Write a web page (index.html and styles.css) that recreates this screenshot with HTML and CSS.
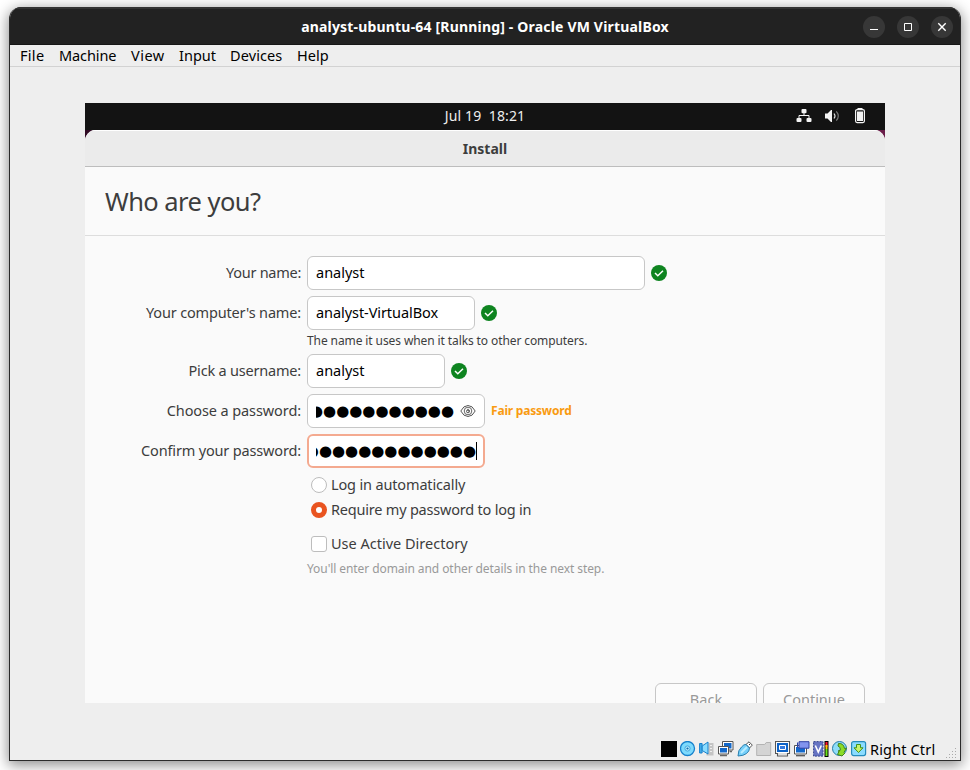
FILE: index.html
```html
<!DOCTYPE html>
<html lang="en">
<head>
<meta charset="utf-8">
<title>analyst-ubuntu-64 [Running] - Oracle VM VirtualBox</title>
<link rel="stylesheet" href="styles.css">
</head>
<body>
<div class="window">
  <header class="titlebar">
    <h1 class="title">analyst-ubuntu-64 [Running] - Oracle VM VirtualBox</h1>
    <div class="controls">
      <span class="control"><svg width="22" height="22" viewBox="0 0 22 22"><path d="M7 13.5h8" stroke="#fff"/></svg></span>
      <span class="control"><svg width="22" height="22" viewBox="0 0 22 22"><path d="M7.5 7.500h7v7h-7z" stroke="#fff" fill="none"/></svg></span>
      <span class="control"><svg width="22" height="22" viewBox="0 0 22 22"><path d="M7.300 7.300l7.400 7.400M14.700 7.300l-7.400 7.400" stroke="#fff" stroke-width="1.400"/></svg></span>
    </div>
  </header>
  <nav class="menu">
    <span class="m-file">File</span><span class="m-machine">Machine</span><span class="m-view">View</span><span class="m-input">Input</span><span class="m-devices">Devices</span><span class="m-help">Help</span>
  </nav>
  <main class="screen">
    <div class="topbar">
      <span class="clock">Jul 19&nbsp; 18:21</span>
      <div class="tray">
        <svg width="16" height="16" viewBox="0 0 16 16" fill="#f4f4f4"><rect x="5.500" y="1" width="5" height="4.200" rx="1"/><rect x=".5" y="10" width="5" height="4" rx="1"/><rect x="10.500" y="10" width="5" height="4" rx="1"/><path d="M8 5v3M3 10V7.500h10V10" stroke="#f4f4f4" fill="none"/></svg>
        <svg width="16" height="16" viewBox="0 0 16 16" fill="none"><path d="M1 5.500h2.500L7 2h1v12H7L3.500 10.500H1z" fill="#f4f4f4"/><path d="M10 5.500q2 2.500 0 5" stroke="#ddd" stroke-width="1.200"/><path d="M12.300 3.300q4 4.700 0 9.400" stroke="#777" stroke-width="1.200"/></svg>
        <svg width="16" height="16" viewBox="0 0 16 16"><rect x="3.600" y="1.600" width="8.800" height="13" rx="1.500" fill="none" stroke="#f4f4f4" stroke-width="1.200"/><path d="M5.500 0h5v2h-5zM5 3.500h6v9.500H5z" fill="#f4f4f4"/></svg>
      </div>
    </div>
    <div class="desktop">
      <section class="installer">
        <h2 class="caption"><span>Install</span></h2>
        <div class="heading"><span>Who are you?</span></div>
        <div class="form">
          <div class="row">
            <label class="l1">Your name:</label>
            <div class="field wide"><span class="v-short">analyst</span></div>
            <svg class="ok" width="16" height="16" viewBox="0 0 16 16"><circle cx="8" cy="8" r="8" fill="#0e8420"/><path d="M4 8l2.800 2.700L12 5.700" fill="none" stroke="#fff" stroke-width="1.500"/></svg>
          </div>
          <div class="row">
            <label class="l2">Your computer's name:</label>
            <div class="field host"><span class="v-host">analyst-VirtualBox</span></div>
            <svg class="ok" width="16" height="16" viewBox="0 0 16 16"><circle cx="8" cy="8" r="8" fill="#0e8420"/><path d="M4 8l2.800 2.700L12 5.700" fill="none" stroke="#fff" stroke-width="1.500"/></svg>
          </div>
          <p class="hint"><span>The name it uses when it talks to other computers.</span></p>
          <div class="row">
            <label class="l3">Pick a username:</label>
            <div class="field user"><span class="v-short">analyst</span></div>
            <svg class="ok" width="16" height="16" viewBox="0 0 16 16"><circle cx="8" cy="8" r="8" fill="#0e8420"/><path d="M4 8l2.800 2.700L12 5.700" fill="none" stroke="#fff" stroke-width="1.500"/></svg>
          </div>
          <div class="row">
            <label class="l4">Choose a password:</label>
            <div class="field pass">
              <div class="dots"><span>●●●●●●●●●●●</span></div>
              <svg class="eye" width="16" height="16" viewBox="0 0 16 16" fill="none" stroke="#555"><path d="M.8 8Q3.500 2.500 8 2.500T15.200 8Q12.500 13.500 8 13.500T.8 8z" stroke-width="1"/><circle cx="8" cy="8" r="3.800" stroke-width=".9"/><path d="M8 5.800v2.200h2" /><circle cx="8" cy="8.300" r="1.500"/></svg>
            </div>
            <strong class="strength">Fair password</strong>
          </div>
          <div class="row">
            <label class="l5">Confirm your password:</label>
            <div class="field pass focus">
              <div class="dots"><span>●●●●●●●●●●●●●</span></div><i class="caret"></i>
            </div>
          </div>
          <div class="option auto"><i class="radio"></i><span class="o1">Log in automatically</span></div>
          <div class="option"><i class="radio on"></i><span class="o2">Require my password to log in</span></div>
          <div class="option directory"><i class="check"></i><span class="o3">Use Active Directory</span></div>
          <p class="hint muted"><span>You'll enter domain and other details in the next step.</span></p>
        </div>
        <div class="actions"><span class="button"><b class="b-back">Back</b></span><span class="button"><b class="b-next">Continue</b></span></div>
      </section>
    </div>
  </main>
  <footer class="status">
    <div class="icons">
      <svg viewBox="0 0 16 16"><path d="M0 0h16v16H0z"/></svg>
      <svg viewBox="0 0 16 16"><circle cx="7.500" cy="7.500" r="7" fill="#7ddafd" stroke="#1681cc" stroke-width="1.300"/><circle cx="7.500" cy="7.500" r="2.600" fill="#b7edff" stroke="#46a8de"/><circle cx="7.500" cy="7.500" r="1.100" fill="#126bae"/></svg>
      <svg viewBox="0 0 16 16"><path d="M9.500 2h5v12.500h-7v-2h2z" fill="#c4c4c4"/><path d="M11 4.500h2M11 7.500h2M11 10.500h2" stroke="#eee"/><path d="M.6 2.500h2.500v9.500H.6z" fill="#45aeea" stroke="#1681cc"/><path d="M3.200 5L9 1v12L3.200 9.500z" fill="#8adcff" stroke="#1681cc"/></svg>
      <svg viewBox="0 0 16 16"><path d="M4.500.500h10.500v8.500H4.500z" fill="#fff" stroke="#555"/><path d="M6 2h7.500v5.500H6z" fill="#1268cb"/><path d="M.5 5.500h10v7.500H.5z" fill="#fff" stroke="#555"/><path d="M2 7h7v4.500H2z" fill="#1268cb"/><path d="M2 14.500h7M11.500 10.500h2.500" stroke="#666" stroke-width="1.300"/></svg>
      <svg viewBox="0 0 16 16"><path d="M9 3.500L12 .8l3.300 3.300L12.500 7z" fill="#fff" stroke="#555"/><path d="M1 15q0-6 3.500-9Q7 3 9 3.500l3.500 3.600q0 3-3 5.400T1 15z" fill="#75cffa" stroke="#287fae"/><path d="M4 12L10 6" stroke="#b9edff" stroke-width="2"/><path d="M12 3l1 1" stroke="#333"/></svg>
      <svg viewBox="0 0 16 16"><path d="M.7 3.500h8l1.500-2h4.500v13H.7z" fill="#d4d4d4" stroke="#b3b3b3"/></svg>
      <svg viewBox="0 0 16 16"><path d="M.5.500h14v12h-2v2.500H2.500v-2.500h-2z" fill="#fff" stroke="#555" stroke-width="1.100"/><path d="M2 2h11v9H2z" fill="#0c62c7"/><path d="M4.500 4.500h6v4h-6z" fill="#3279df" stroke="#fff"/><path d="M3 13h9" stroke="#bbb"/></svg>
      <svg viewBox="0 0 16 16"><path d="M.5 4.500h12v8.500H.5z" fill="#fff" stroke="#555"/><path d="M2 6h9v5.500H2z" fill="#1268cb"/><path d="M2 14.700h9" stroke="#555" stroke-width="1.300"/><path d="M5 .7h10v6.500H5z" fill="#8294ee" stroke="#3042a4"/><path d="M3.500 1.500v5" stroke="#3042a4"/></svg>
      <svg viewBox="0 0 16 16"><path d="M.6.6H10v14.500H.6z" fill="#6674c3" stroke="#34448d" stroke-dasharray="2 1"/><path d="M2.300 4.500l3 6.500 3-6.500" fill="none" stroke="#fff" stroke-width="1.600"/><path d="M11.500 0h4v16h-4z"/><path d="M12.500 1h2v5h-2z" fill="#f13"/><path d="M12.500 4h2v4h-2z" fill="#ffc800"/><path d="M12.500 8h2v7h-2z" fill="#6be41b"/></svg>
      <svg viewBox="0 0 16 16"><circle cx="7.500" cy="7.500" r="7" fill="#8edcf8" stroke="#267ba8"/><path d="M6.500 2.500q5-.5 6 5l2-.3-3.500 5.800-5-3 2.300-.8Q9 6 6 5z" fill="#8bdc26" stroke="#43811b"/><path d="M7 10.500l-1.500 3 4.500 1.500 3-3" fill="#8bdc26" stroke="#43811b"/></svg>
      <svg viewBox="0 0 16 16"><rect x=".6" y=".6" width="14" height="14" rx="2" fill="#8bdcff" stroke="#268cbd" stroke-width="1.200"/><path d="M5.500 3.500h4v3.300h2.500L7.500 11.500 3 6.800h2.500z" fill="#c9f36c" stroke="#43911b"/></svg>
    </div>
    <span class="hostkey">Right Ctrl</span>
    <svg class="grip" width="12" height="12" viewBox="0 0 12 12" fill="#aaa"><path d="M9 0h1v1H9zM6 3h1v1H6zM9 3h1v1H9zM3 6h1v1H3zM6 6h1v1H6zM9 6h1v1H9zM0 9h1v1H0zM3 9h1v1H3zM6 9h1v1H6zM9 9h1v1H9z"/></svg>
  </footer>
</div>
</body>
</html>
```
FILE: styles.css
```css
* { box-sizing: border-box; }
body {
  margin: 0; width: 970px; height: 770px; padding: 7px 9px; overflow: hidden;
  background: #fff; color: #3d3d3d;
  font: 14.5px/20px "Noto Sans", "Open Sans", sans-serif;
}
h1, h2, p { margin: 0; font-size: inherit; }
span, label, strong, b { white-space: pre; }
svg { display: block; flex: none; }
.window {
  width: 952px; height: 754px; display: flex; flex-direction: column;
  border: 1px solid #2b2b2b; border-top: 0; border-radius: 12px 12px 0 0;
  background: #eee; overflow: hidden;
  box-shadow: 0 3px 14px 1px rgba(0,0,0,.45);
}
.titlebar {
  height: 38px; flex: none; display: grid; grid-template-columns: 110px 1fr 110px; align-items: center;
  background: #222; border-top: 2px solid #333; border-bottom: 1px solid #171717; color: #fff;
}
.title { grid-column: 2; text-align: center; font-size: 14px; letter-spacing: .18px; white-space: pre; }
.controls { display: flex; gap: 12px; justify-content: flex-end; padding-right: 7px; }
.control { width: 22px; height: 22px; border-radius: 50%; background: #373737; }
.menu { height: 22px; flex: none; display: flex; border-bottom: 1px solid #d2d2d2; padding-left: 10px; color: #000; line-height: 21px; }
.menu span { flex: none; }
.m-file { width: 39px; letter-spacing: .3px; }
.m-machine { width: 72px; letter-spacing: -.1px; }
.m-view { width: 48px; letter-spacing: .5px; }
.m-input { width: 51px; }
.m-devices { width: 67px; letter-spacing: .1px; }
.screen { width: 800px; height: 600px; flex: none; margin: 36px 0 0 75px; overflow: hidden; }
.topbar { height: 27px; display: grid; grid-template-columns: 100px 1fr 100px; align-items: center; background: #131313; color: #eee; }
.clock { grid-column: 2; text-align: center; font-size: 14px; letter-spacing: .12px; padding-bottom: 2px; }
.tray { display: flex; gap: 12px; justify-content: flex-end; padding: 0 17px 2px 0; }
.desktop { height: 573px; background: linear-gradient(90deg, #300a24, #6a1d49); }
.installer { height: 573px; display: flex; flex-direction: column; border-radius: 11px 11px 0 0; background: #fafafa; overflow: hidden; }
.caption { height: 37px; flex: none; background: #ebebeb; border-top: 1px solid #fff; border-bottom: 1px solid #bdbdbd; text-align: center; line-height: 36px; font-size: 14px; }
.heading { height: 69px; flex: none; padding-left: 20px; border-bottom: 1px solid #ddd; font-size: 25.5px; letter-spacing: -.55px; line-height: 69px; }
.form { flex: none; height: 447px; padding-top: 20px; }
.row { display: flex; align-items: center; height: 34px; margin-bottom: 6px; }
.row label { width: 216px; margin-right: 6px; display: flex; justify-content: flex-end; padding-bottom: 2px; letter-spacing: -.16px; }
.row .l1 { letter-spacing: -.28px; }
.row .l2 { padding-bottom: 3px; }
.row .l3 { letter-spacing: -.2px; }
.row .l4 { letter-spacing: -.1px; }
.field { height: 34px; display: flex; align-items: center; padding-left: 8px; border: 1px solid #c7c7c7; border-radius: 6px; background: #fff; color: #000; }
.field > span { padding-bottom: 2px; }
.v-host { letter-spacing: -.07px; }
.wide { width: 338px; }
.host { width: 168px; }
.user { width: 138px; }
.pass { width: 178px; }
.ok { margin-left: 6px; }
.dots { width: 138px; height: 24px; display: flex; justify-content: flex-end; overflow: hidden; font: 15px/24px "DejaVu Sans", sans-serif; letter-spacing: 0; }
.eye { margin-left: 6px; }
.strength { margin-left: 6px; color: #f99b11; font-size: 12px; letter-spacing: -.2px; }
.focus { border: 2px solid #f4aa90; padding-left: 7px; }
.focus .dots { width: 160px; }
.caret { width: 1px; height: 18px; background: #000; }
.hint { height: 18px; margin-top: -4px; margin-bottom: 4px; padding-left: 222px; font-size: 12px; line-height: 18px; letter-spacing: -.1px; }
.muted { color: #999; margin-top: 5px; letter-spacing: -.08px; }
.option { display: flex; align-items: center; gap: 4px; height: 22px; padding-left: 226px; margin-bottom: 3px; }
.option span { padding-bottom: 2px; }
.o1 { letter-spacing: -.15px; }
.o2 { letter-spacing: -.21px; }
.directory { margin-top: 12px; }
.radio, .check { width: 16px; height: 16px; border: 1px solid #bdbdbd; border-radius: 50%; background: #fff; }
.check { border-radius: 3px; }
.on { border: 5px solid #e95420; }
.actions { flex: none; display: flex; gap: 6px; justify-content: flex-end; padding-right: 20px; }
.button { width: 102px; height: 34px; display: flex; justify-content: center; border: 1px solid #c7c7c7; border-radius: 6px; line-height: 30px; color: #999; background: #fcfcfc; }
.button b { font-weight: 400; }
.status { height: 24px; flex: none; margin-top: 34px; padding-left: 651px; display: flex; align-items: center; color: #000; }
.icons { display: flex; gap: 3px; }
.icons svg { width: 16px; height: 16px; }
.hostkey { margin-left: 3px; letter-spacing: .15px; }
.grip { margin: 10px 2px 0 auto; }
```
